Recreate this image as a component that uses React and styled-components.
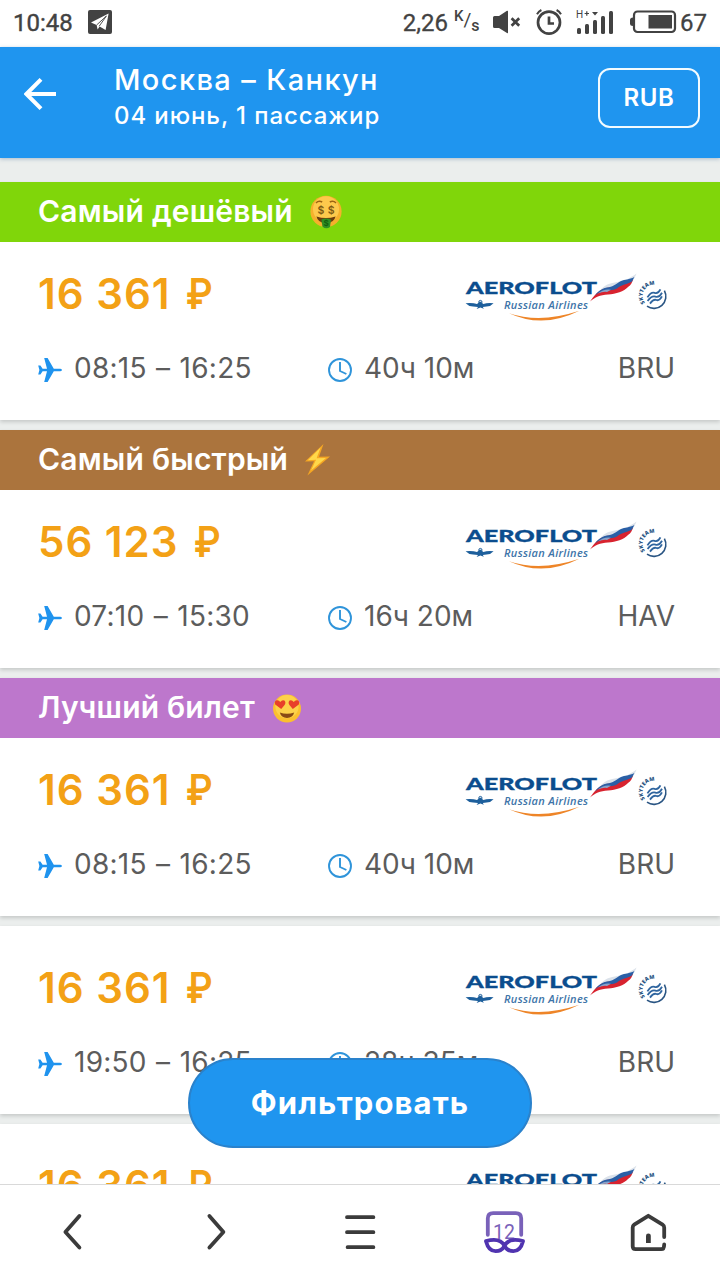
import React from 'react'
import styled, { createGlobalStyle } from 'styled-components'

const tickets = [
  { ribbon: 'Самый дешёвый', color: '#80d60a', emoji: 'money', price: '16 361', time: '08:15 – 16:25', duration: '40ч 10м', via: 'BRU' },
  { ribbon: 'Самый быстрый', color: '#ab743d', emoji: 'bolt', price: '56 123', time: '07:10 – 15:30', duration: '16ч 20м', via: 'HAV' },
  { ribbon: 'Лучший билет', color: '#bd77cc', emoji: 'love', price: '16 361', time: '08:15 – 16:25', duration: '40ч 10м', via: 'BRU' },
  { price: '16 361', time: '19:50 – 16:25', duration: '28ч 35м', via: 'BRU' },
  { price: '16 361', time: '19:50 – 16:25', duration: '28ч 35м', via: 'BRU' },
]

function StatusBar() {
  return (
    <Status>
      <Clock>10:48</Clock>
      <svg width="24" height="24" viewBox="0 0 24 24">
        <rect width="24" height="24" rx="2" fill="#424242" />
        <path d="M3 12.4L20.6 3.6L17.6 20L11.6 16.4L9.6 19.6L8.6 15z" fill="#fff" />
        <path d="M8.6 15L18.4 6L11.2 16.2" fill="none" stroke="#424242" strokeWidth="0.9" />
      </svg>
      <Speed>2,26</Speed>
      <Unit>
        <sup>K</sup>
        <i>/</i>
        <sub>s</sub>
      </Unit>
      <MuteIcon width="28" height="24" viewBox="0 0 28 24">
        <path d="M1.5 6H6L14 .8Q15 .4 15 1.6V22.4Q15 23.6 14 23L6 18H1.5Q0 18 0 16.5V7.5Q0 6 1.5 6z" fill="#424242" />
        <path d="M18.6 8.2L26.2 15.8M26.2 8.2L18.6 15.8" stroke="#424242" strokeWidth="2.7" />
      </MuteIcon>
      <AlarmIcon width="26" height="26" viewBox="0 0 26 26" fill="none" stroke="#424242">
        <circle cx="13" cy="13.6" r="11" strokeWidth="2.7" />
        <path d="M13 7.5V14.5H18" strokeWidth="2.7" />
        <path d="M1 5.2Q2.6 2.4 5.4 1M25 5.2Q23.4 2.4 20.6 1" strokeWidth="2" />
      </AlarmIcon>
      <SignalIcon width="38" height="26" viewBox="0 0 38 26">
        <g fill="#424242">
          <rect x="1" y="19" width="4" height="6" rx="1.5" />
          <rect x="9" y="15" width="4" height="10" rx="1.5" />
          <rect x="17" y="11" width="4" height="14" rx="1.5" />
          <rect x="25" y="7" width="4" height="18" rx="1.5" />
          <rect x="33" y="2" width="4" height="23" rx="1.5" />
          <path d="M16 3H22L19 6.5z" />
          <text x="0" y="9" fontFamily="Roboto, sans-serif" fontSize="10">H</text>
          <path d="M8.6 4.5H13M10.8 2.3V6.7" stroke="#424242" strokeWidth="1.2" />
        </g>
      </SignalIcon>
      <BatteryIcon width="47" height="24" viewBox="0 0 47 24">
        <rect x="4" y="1.5" width="41" height="20.5" rx="3.5" fill="none" stroke="#424242" strokeWidth="2.2" />
        <path d="M3 7.5Q0 7.5 0 10V13.5Q0 16 3 16z" fill="#424242" />
        <rect x="18.5" y="5" width="23.5" height="13.5" fill="#424242" />
      </BatteryIcon>
      <Charge>67</Charge>
    </Status>
  )
}

function Emoji({ name }) {
  if (name === 'bolt') {
    return (
      <svg width="26" height="34" viewBox="2 0 26 34">
        <path d="M20.5 1L2 18.6L11 18.2L4.4 32.6L27 13.4L16 13.8z" fill="#f5a623" />
        <path d="M17.6 4.6L4.8 17.2L13 16.8L8 27.6L23 14.9L13.6 15.2z" fill="#ffd84a" />
      </svg>
    )
  }
  if (name === 'love') {
    return (
      <svg width="30" height="30" viewBox="0 0 30 30">
        <circle cx="15" cy="15.6" r="14" fill="#fbc02f" />
        <circle cx="15" cy="13.6" r="11.6" fill="#fdd24a" />
        <path d="M9.2 16L3.2 11.4Q2 8 4.6 7.3Q7 6.8 8.2 9Q10.3 6.3 12.4 7.6Q14.4 9.6 12.4 12.3z" fill="#e8402a" />
        <path d="M20.8 16L26.8 11.4Q28 8 25.4 7.3Q23 6.8 21.8 9Q19.7 6.3 17.6 7.6Q15.6 9.6 17.6 12.3z" fill="#e8402a" />
        <path d="M7.8 19.6Q15 22 22.2 19.6Q20.8 25 15 25Q9.2 25 7.8 19.6z" fill="#8a4b14" />
      </svg>
    )
  }
  return (
    <svg width="34" height="34" viewBox="1 0 34 34">
      <circle cx="17" cy="16.4" r="15.6" fill="#f6b02c" />
      <circle cx="17" cy="14.2" r="13" fill="#fdc94c" />
      <path d="M7 8Q9.6 5.2 13.2 7M20.8 7Q24.4 5.2 27 8" fill="none" stroke="#9c6412" strokeWidth="1.5" />
      <text x="8.4" y="19.4" fontFamily="Inter, sans-serif" fontSize="10.5" fontWeight="600" fill="#7d5a12">$</text>
      <text x="18.8" y="19.4" fontFamily="Inter, sans-serif" fontSize="10.5" fontWeight="600" fill="#7d5a12">$</text>
      <path d="M7.4 21.4Q17 24.6 26.6 21.4Q25 28 17 28Q9 28 7.4 21.4z" fill="#6b3c0c" />
      <path d="M12.4 24.4Q17 22.6 22 24.4L21 32Q17 35 13.4 31.4z" fill="#2f8f24" />
      <text x="14.4" y="31.4" fontFamily="Inter, sans-serif" fontSize="8" fontWeight="700" fill="#14600f">$</text>
    </svg>
  )
}

function PlaneIcon() {
  return (
    <svg width="24" height="24" viewBox="0 0 24 24" fill="#1f93ee">
      <path d="M22.4 10.7H15.8L9.6 0H6.2L9 10.7H4.6L2.4 7.6H.2L1.4 12L.2 16.4H2.4L4.6 13.3H9L6.2 24H9.6L15.8 13.3H22.4Q24 13 24 12T22.4 10.7z" />
    </svg>
  )
}

function ClockIcon() {
  return (
    <svg width="24" height="24" viewBox="0 0 24 24" fill="none" stroke="#2f94da" strokeWidth="1.9">
      <circle cx="12" cy="12" r="11" />
      <path d="M12 4V13L18.4 16" />
    </svg>
  )
}

function AeroflotLogo() {
  return (
    <Logo width="204" height="52" viewBox="0 0 204 52">
      <text x="1" y="24" fontFamily="Lato, sans-serif" fontSize="16.8" fontWeight="900" fill="#0b4d8e" stroke="#0b4d8e" strokeWidth="0.3" textLength="131" lengthAdjust="spacingAndGlyphs">AEROFLOT</text>
      <text x="39" y="38.8" fontFamily="Open Sans, sans-serif" fontSize="11" fontWeight="600" fontStyle="italic" fill="#3d74a8" textLength="84" lengthAdjust="spacing">Russian Airlines</text>
      {/* winged emblem */}
      <path d="M.6 33.2Q8 32.6 12 34L15.2 31.6L18.4 34Q22 32.6 28.6 33.2Q26 36.2 21.6 36.6L17.8 37L18.8 38.8L15.4 37.6L11.6 39L13 37L8 36.6Q3.4 36.2 .6 33.2z" fill="#1d5f9c" />
      <circle cx="15.4" cy="32" r="1.6" fill="none" stroke="#1d5f9c" strokeWidth="1" />
      {/* orange smile */}
      <path d="M44 43.2Q75 53.8 114.4 40.8Q78 59 44 43.2z" fill="#ee8528" />
      {/* flag */}
      <path d="M132 24C138 16 142 13.6 150 12.4C160 10.8 165 8 171.6 3.4C169 9 167 13 163 15C156 18 150 20 132 24z" fill="#dbe2ea" />
      <path d="M125 31.6C131 23 136 18.6 144 17.6C154 16.4 162 13.6 168 9.6C167 13 166 15 163 17C159 21.6 151 24 143 24.4C135 25 130 27 125 31.6z" fill="#d8232f" />
      <path d="M130 25.4C134 20 138 18 144 17.2C149 16.4 151 13.8 156 11C160 9 164 10 169.4 7L167 11.6C162 14.6 157 14.6 152 18.4C146 21.4 138 18.6 130 25.4z" fill="#2a5fa6" />
      <path d="M133 23.4Q139 18.6 146 19.8L142 22Q138 21.4 133 23.4z" fill="#8aa3c8" />
      {/* SkyTeam badge */}
      <path id="skyteam" d="M180 33A10.8 10.8 0 0 1 197.4 19" fill="none" />
      <text fontFamily="Open Sans, sans-serif" fontSize="5.4" fontWeight="800" fill="#2a5583">
        <textPath href="#skyteam" textLength="26">SKYTEAM</textPath>
      </text>
      <path d="M199.4 20.6A12 12 0 0 1 182 36.2" fill="none" stroke="#2a5583" strokeWidth="1.6" />
      <path d="M182.4 27.4Q186 21.6 189.6 22.8T195.4 19.4M182.6 31Q186.6 25.4 190.4 26.6T197 22.8M185 33.6Q188.6 28.8 191.4 30T197 26.4" fill="none" stroke="#2f659f" strokeWidth="1.8" />
    </Logo>
  )
}

function Ticket({ ticket }) {
  return (
    <Card>
      {ticket.ribbon && (
        <Ribbon $color={ticket.color}>
          <span>{ticket.ribbon}</span>
          <Emoji name={ticket.emoji} />
        </Ribbon>
      )}
      <CardBody $plain={!ticket.ribbon}>
        <PriceRow>
          <Price>
            {ticket.price} <Ruble>₽</Ruble>
          </Price>
          <AeroflotLogo />
        </PriceRow>
        <InfoRow>
          <Info>
            <PlaneIcon />
            <Time>{ticket.time}</Time>
          </Info>
          <Info>
            <ClockIcon />
            <Value>{ticket.duration}</Value>
          </Info>
          <Value>{ticket.via}</Value>
        </InfoRow>
      </CardBody>
    </Card>
  )
}

function Toolbar() {
  return (
    <Bottom>
      <NavIcon viewBox="0 0 48 48">
        <path d="M31.4 7L17.4 23L31.4 38.6" />
      </NavIcon>
      <NavIcon viewBox="0 0 48 48">
        <path d="M17.4 7L31.4 23L17.4 38.6" />
      </NavIcon>
      <NavIcon viewBox="0 0 48 48">
        <path d="M11 8.2H37.4M11 23.2H37.4M11.6 38.2H37.4" />
      </NavIcon>
      <NavIcon viewBox="0 0 48 48">
        <path d="M7.8 25.8V9.6Q7.8 4.2 13.2 4.2H35.8Q41.2 4.2 41.2 9.6V25.8" stroke="#7961b9" />
        <text x="13" y="30.4" fontFamily="Roboto, sans-serif" fontSize="19.5" fill="#7961b9" stroke="none">12</text>
        <path d="M6 32.2Q20 28.2 24.5 36.8Q29 28.2 43 32.2Q40.4 42.2 33.4 42.2Q27.4 42.2 24.5 36.8Q21.6 42.2 15.6 42.2Q8.6 42.2 6 32.2z" stroke="#5034b0" />
      </NavIcon>
      <NavIcon viewBox="0 0 48 48">
        <path d="M40.2 28V18.6Q40.2 16.6 38.6 15.6L24.3 6.8L10.2 15.6Q8.7 16.6 8.7 18.6V37.2Q8.7 40.2 11.7 40.2H37.2Q40.2 40.2 40.2 35.4" />
        <path d="M22 34V26.8Q22 24.6 24.4 24.6T26.8 26.8V34z" fill="#3b3b3b" stroke="none" />
      </NavIcon>
    </Bottom>
  )
}

export default function App() {
  return (
    <Screen>
      <GlobalStyle />
      <StatusBar />
      <Header>
        <BackIcon width="32" height="32" viewBox="0 0 32 32">
          <path d="M17 1.4L2.4 16L17 30.6M2.4 16H32" fill="none" stroke="#fff" strokeWidth="4" />
        </BackIcon>
        <Route>
          <Title>Москва – Канкун</Title>
          <Subtitle>04 июнь, 1 пассажир</Subtitle>
        </Route>
        <Currency>RUB</Currency>
      </Header>
      <Results>
        {tickets.map((ticket, i) => (
          <Ticket key={i} ticket={ticket} />
        ))}
        <FilterButton>Фильтровать</FilterButton>
      </Results>
      <Toolbar />
    </Screen>
  )
}

const GlobalStyle = createGlobalStyle`
  body {
    margin: 0;
    font-family: Inter, 'Liberation Sans', sans-serif;
  }

  svg {
    display: block;
    flex-shrink: 0;
  }
`

const Screen = styled.div`
  width: 720px;
  height: 1280px;
  display: flex;
  flex-direction: column;
  overflow: hidden;
  background: #ebeeed;
`

const Status = styled.div`
  display: flex;
  align-items: center;
  flex-shrink: 0;
  box-sizing: border-box;
  height: 47px;
  padding: 0 14px 3px;
  background: #fff;
  color: #424242;
  font: 400 24px/44px Roboto, sans-serif;
`

const Clock = styled.span`
  width: 75px;
  margin-left: -1px;
  padding-top: 1px;
  -webkit-text-stroke: 0.4px;
`

const Speed = styled.span`
  margin-left: auto;
  padding-top: 1px;
  -webkit-text-stroke: 0.3px;
`

const Unit = styled.span`
  display: flex;
  width: 24px;
  margin-left: 6px;
  font-weight: 500;
  line-height: 20px;

  sup, sub, i {
    font-style: normal;
    vertical-align: baseline;
  }

  sup {
    margin-top: -2px;
    font-size: 15px;
  }

  i {
    margin-top: 2px;
    font-size: 19px;
    font-weight: 400;
  }

  sub {
    margin-top: 8px;
    font-size: 16px;
  }
`

const MuteIcon = styled.svg`
  margin-left: 15px;
`

const AlarmIcon = styled.svg`
  margin-left: 15px;
`

const SignalIcon = styled.svg`
  margin-left: 14px;
`

const BatteryIcon = styled.svg`
  margin-left: 16px;
`

const Charge = styled.span`
  margin-left: 3px;
  margin-right: -1px;
  padding-top: 1px;
  -webkit-text-stroke: 0.3px;
`

const Header = styled.header`
  display: flex;
  align-items: center;
  flex-shrink: 0;
  box-sizing: border-box;
  height: 111px;
  padding: 0 20px 11px 24px;
  background: #1f95ef;
  color: #fff;
  box-shadow: 0 1px 4px rgba(70, 110, 150, 0.4);
  z-index: 1;
`

const BackIcon = styled.svg`
  margin-bottom: 6px;
`

const Route = styled.div`
  flex: 1;
  margin: -1px 0 0 58px;
`

const Title = styled.h1`
  margin: 0;
  font-size: 29px;
  font-weight: 500;
  line-height: 37px;
  letter-spacing: 1.4px;
`

const Subtitle = styled.p`
  margin: 0;
  font-size: 24px;
  font-weight: 500;
  line-height: 35px;
  letter-spacing: 0.9px;
`

const Currency = styled.button`
  width: 102px;
  height: 60px;
  margin-top: 1px;
  padding: 0;
  border: 2px solid #f2fbff;
  border-radius: 12px;
  background: none;
  color: #fff;
  font: 600 24px Inter, sans-serif;
  letter-spacing: 0.6px;
`

const Results = styled.main`
  position: relative;
  display: flex;
  flex: 1;
  flex-direction: column;
  gap: 10px;
  min-height: 0;
  padding-top: 24px;
  overflow: hidden;
`

const Card = styled.article`
  flex-shrink: 0;
  background: #fff;
  box-shadow: 0 2px 4px rgba(0, 0, 0, 0.16);
`

const Ribbon = styled.div`
  display: flex;
  align-items: center;
  gap: 17px;
  height: 60px;
  padding-left: 38px;
  background: ${({ $color }) => $color};
  color: #fff;
  font-size: 30px;
  font-weight: 600;
  letter-spacing: 0.2px;

  span {
    margin-top: -2px;
  }
`

const CardBody = styled.div`
  box-sizing: border-box;
  height: ${({ $plain }) => ($plain ? 188 : 178)}px;
  padding: ${({ $plain }) => ($plain ? 36 : 26)}px 45px 0 38px;
`

const PriceRow = styled.div`
  display: flex;
  align-items: center;
  justify-content: space-between;
  height: 52px;
  margin-right: 6px;
`

const Logo = styled.svg`
  margin-top: 4px;
`

const Price = styled.strong`
  margin-top: -2px;
  color: #f3a116;
  font-size: 42px;
  font-weight: 600;
  letter-spacing: 1px;
`

const Ruble = styled.span`
  display: inline-block;
  transform: scaleX(0.88);
  transform-origin: right;
`

const InfoRow = styled.div`
  display: grid;
  grid-template-columns: 290px 1fr auto;
  align-items: center;
  height: 40px;
  margin-top: 30px;
  color: #5c5c5c;
  font-size: 28px;
`

const Info = styled.div`
  display: flex;
  align-items: center;
  gap: 12px;
  white-space: nowrap;
`

const Value = styled.span`
  margin-top: -4px;
`

const Time = styled(Value)`
  letter-spacing: 0.25px;
  word-spacing: 1.2px;
`

const FilterButton = styled.button`
  position: absolute;
  left: 188px;
  bottom: 36px;
  width: 344px;
  height: 90px;
  padding: 0 0 2px;
  border: 2px solid #2a82cc;
  border-radius: 45px;
  background: #1f95ef;
  color: #fff;
  font: 700 31px Inter, sans-serif;
  letter-spacing: 1.1px;
`

const Bottom = styled.nav`
  display: grid;
  grid-template-columns: repeat(5, 1fr);
  align-items: center;
  justify-items: center;
  flex-shrink: 0;
  box-sizing: border-box;
  height: 96px;
  border-top: 1px solid #d9d9d9;
  background: #fff;
  z-index: 1;
`

const NavIcon = styled.svg`
  width: 48px;
  height: 48px;
  fill: none;
  stroke: #3b3b3b;
  stroke-width: 3.8;
  stroke-linecap: round;
  stroke-linejoin: round;
`
